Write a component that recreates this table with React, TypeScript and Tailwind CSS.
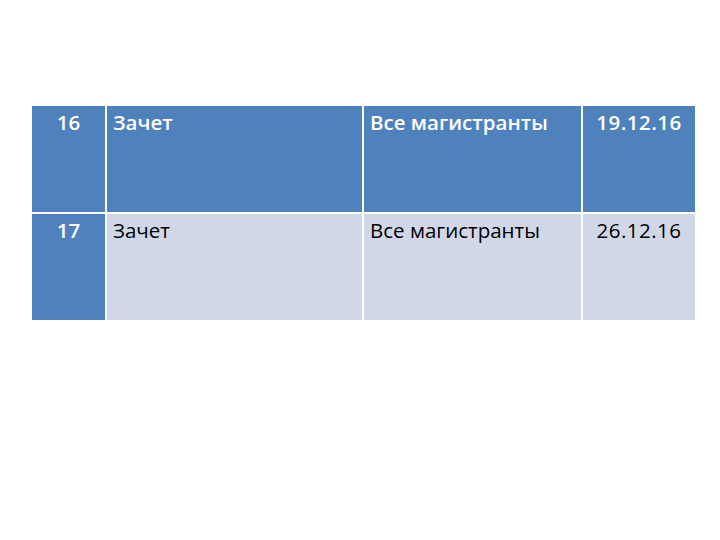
import React from "react";

const rows = [
  { n: "16", a: "Зачет", b: "Все магистранты", d: "19.12.16", head: true },
  { n: "17", a: "Зачет", b: "Все магистранты", d: "26.12.16", head: false },
];

export default function App() {
  return (
    <div className="w-[720px] h-[540px] bg-white pt-[106px] pl-[32px]" style={{ fontFamily: '"Open Sans", "Noto Sans", sans-serif' }}>
      <div className="grid grid-cols-[73px_255px_217px_112px] gap-[2px] w-[663px]">
        {rows.map((r) => (
          <React.Fragment key={r.n}>
            <div className="h-[106px] bg-[#4f81bd] text-white font-semibold text-[20.5px] leading-[26px] pt-[3px] text-center">{r.n}</div>
            <div className={`h-[106px] ${r.head ? "bg-[#4f81bd] text-white font-semibold" : "bg-[#d0d8e8] text-black"} text-[20.5px] leading-[26px] pt-[3px] pl-[6px]`}>{r.a}</div>
            <div className={`h-[106px] ${r.head ? "bg-[#4f81bd] text-white font-semibold" : "bg-[#d0d8e8] text-black"} text-[20.5px] leading-[26px] pt-[3px] pl-[6px]`}>{r.b}</div>
            <div className={`h-[106px] ${r.head ? "bg-[#4f81bd] text-white font-semibold" : "bg-[#d0d8e8] text-black"} text-[20.5px] leading-[26px] pt-[3px] text-center tracking-[0.5px]`}>{r.d}</div>
          </React.Fragment>
        ))}
      </div>
    </div>
  );
}
